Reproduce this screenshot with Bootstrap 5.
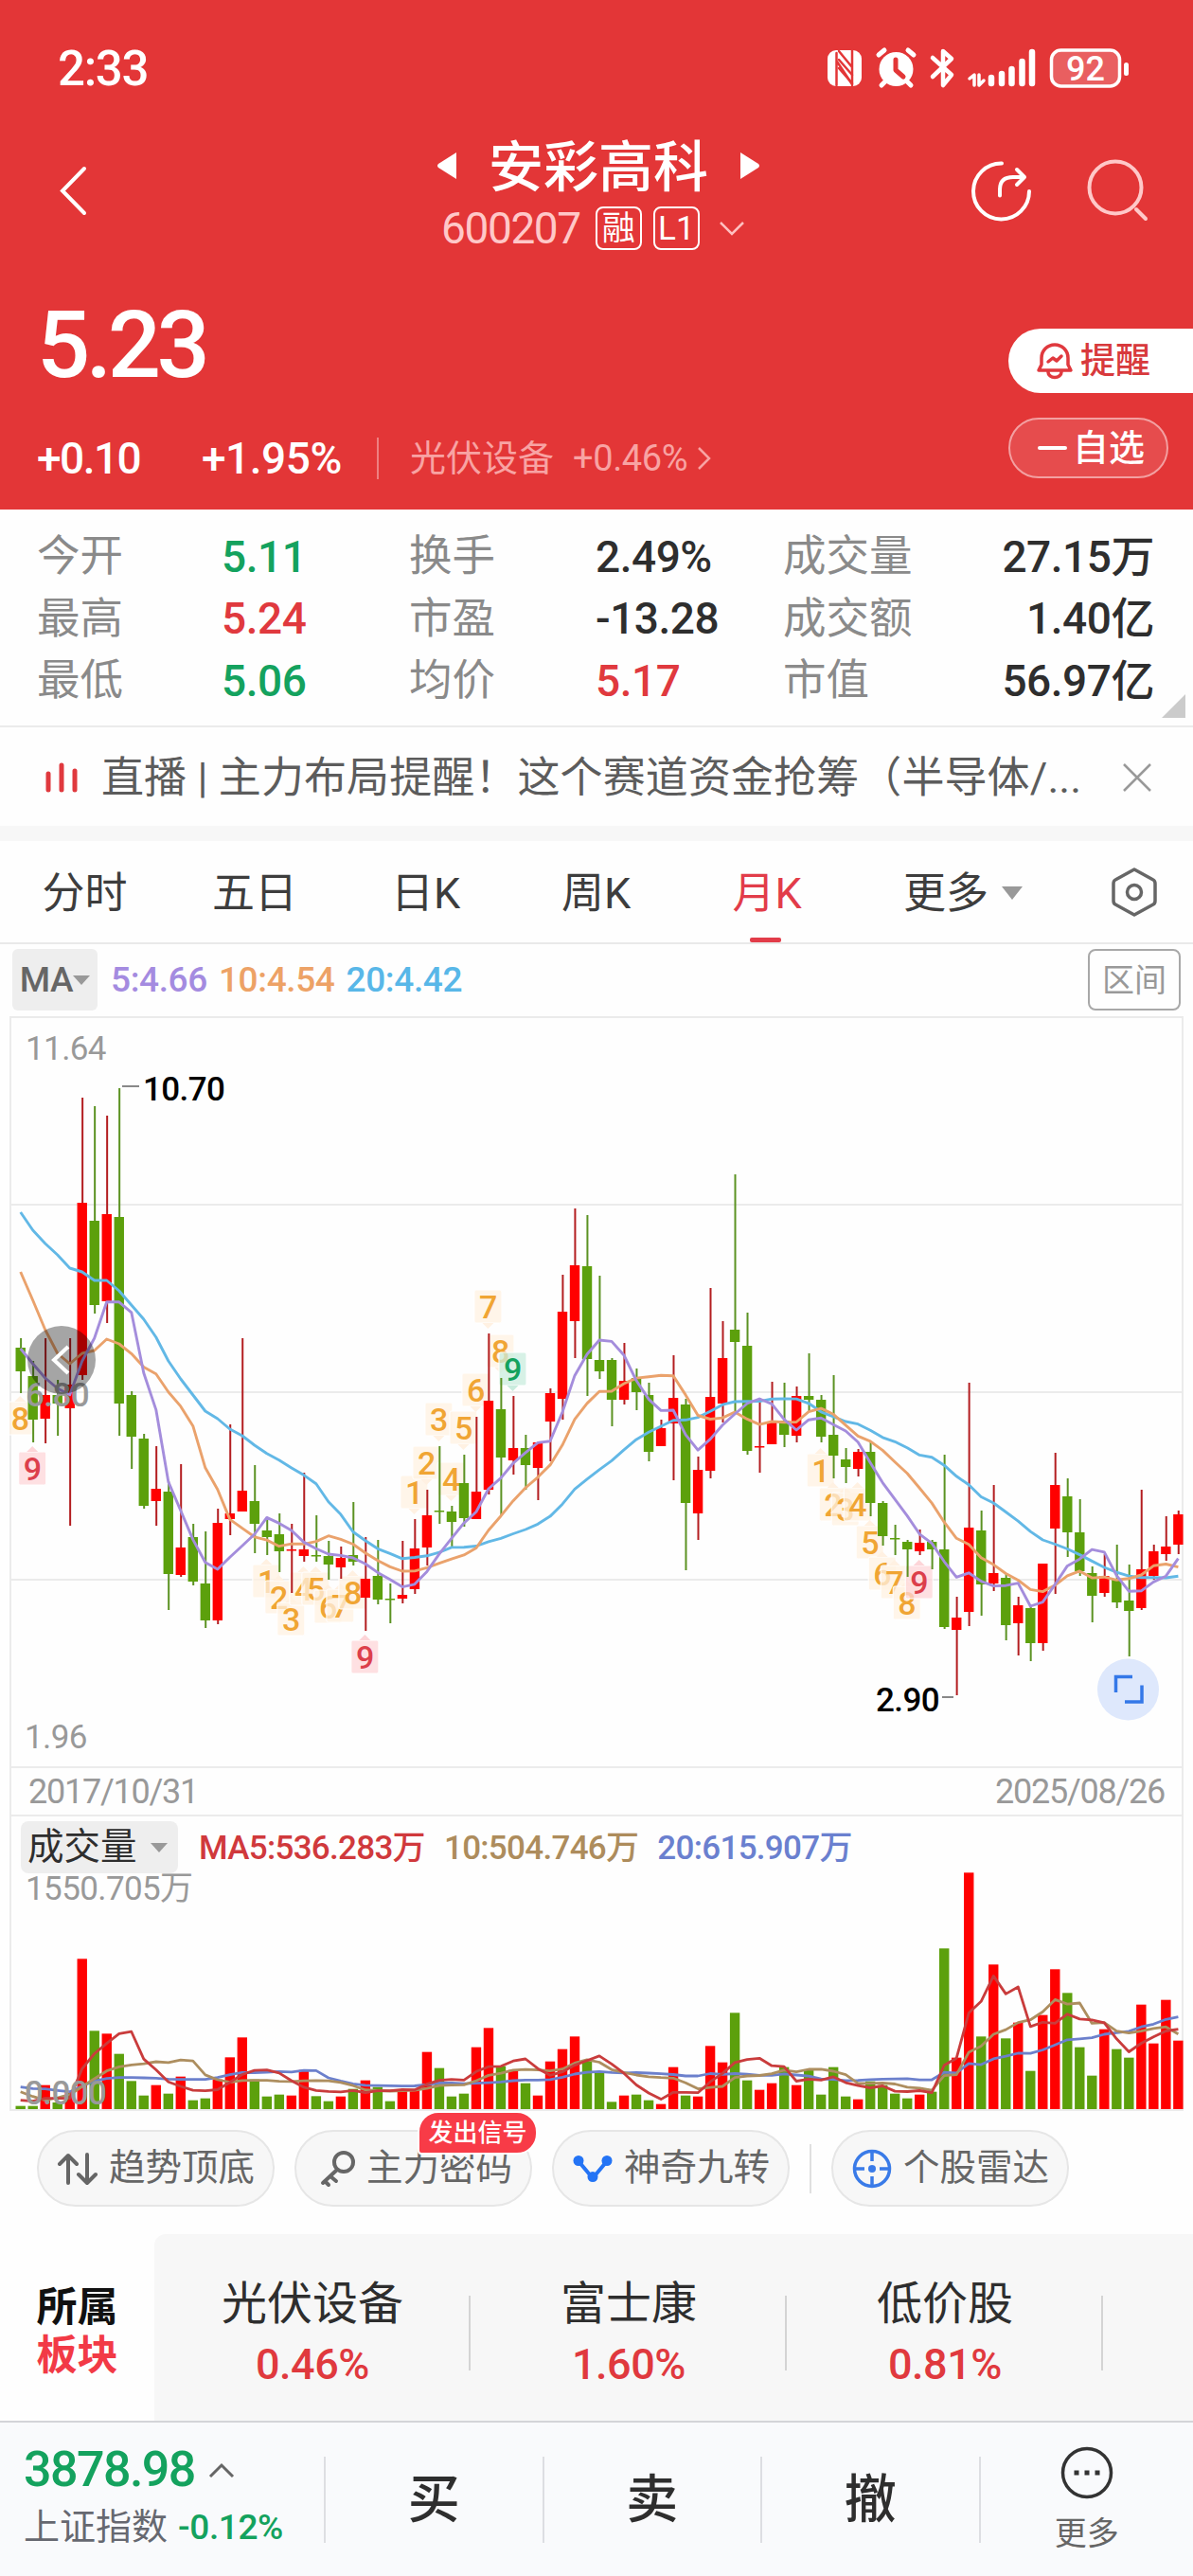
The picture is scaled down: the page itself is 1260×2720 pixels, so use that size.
<!DOCTYPE html>
<html lang="zh-CN">
<head>
  <meta charset="UTF-8" />
  <meta name="viewport" content="width=device-width, initial-scale=1" />
  <title>安彩高科 600207</title>

  <link href="https://cdn.jsdelivr.net/npm/bootstrap@5.3.0/dist/css/bootstrap.min.css" rel="stylesheet">
  <style>
    body {
      width: 1260px;
      background: #fefefe;
      color: #2e2e2e;
      font-family: Roboto, "Noto Sans CJK SC", sans-serif;
      font-size: 45px;
      line-height: 1;
    }
    span, div { white-space: nowrap; }
    svg { display: block; flex-shrink: 0; overflow: visible; }
    .num { letter-spacing: -0.01em; }
    .up { color: #e0393e; }
    .down { color: #14a25e; }

    /* header */
    .top-area { height: 538px; background: #e33637; color: #fff; }
    .status-bar { height: 144px; padding: 0 68px 0 61px; }
    .clock { font-size: 51px; font-weight: 500; letter-spacing: -1.3px; }
    .title-bar { height: 132px; padding: 0 46px 0 62px; }
    .stock-name { font-size: 58px; font-weight: 500; padding: 0 33px; }
    .stock-code { font-size: 46px; color: #ffc8c8; letter-spacing: -0.03em; }
    .tag-box { width: 49px; height: 46px; border: 2px solid #fff; border-radius: 8px; font-size: 35px; }
    .price-row { height: 262px; padding-left: 39px; }
    .last-price { padding-top: 39px; font-size: 99px; font-weight: 500; letter-spacing: -4.5px; }
    .change-row { padding-top: 47px; font-size: 46px; font-weight: 500; }
    .sector { color: #f8a3a3; font-weight: 400; font-size: 38px; }
    .v-line { width: 2px; height: 44px; background: #ee8081; }
    .remind { width: 195px; height: 68px; padding-left: 30px; border-radius: 34px 0 0 34px; background: #fff; color: #d8393c; font-size: 37px; font-weight: 500; }
    .favor { width: 169px; height: 64px; padding-left: 29px; border: 2px solid #f3a0a1; border-radius: 32px; background: #e64c4d; font-size: 38px; font-weight: 500; }
    .dash { width: 31px; height: 4px; border-radius: 2px; background: #fff; }

    /* quote table */
    .quotes { height: 230px; padding: 17px 41px 0 39px; border-bottom: 2px solid #ebebeb; }
    .quote-row { height: 65.5px; font-size: 46px; }
    .quote-row .num { font-weight: 500; }
    .quote-row .lbl { color: #8a8a8a; font-size: 45.5px; }
    .fold-mark { right: 8px; bottom: 8px; width: 25px; height: 25px; background: #cbcbcb; clip-path: polygon(100% 0, 100% 100%, 0 100%); }

    .notice { height: 104px; padding: 2px 44px 0 47px; color: #5c5c5c; }
    .band { height: 16px; background: #f7f7f7; }

    /* period tabs */
    .periods { height: 109px; border-bottom: 2px solid #e9e9e9; color: #3d3d3d; }
    .periods .tab-item { height: 107px; padding-top: 3px; }
    .tab-on { color: #e23c49; }
    .tab-on::after { content: ""; position: absolute; bottom: 0; left: 50%; width: 33px; height: 5px; margin-left: -18px; border-radius: 2px; background: #e23c49; }
    .caret { width: 0; height: 0; border: 11px solid transparent; border-bottom: 0; border-top: 14px solid #999; }
    .caret-sm { border-width: 9px; border-bottom: 0; border-top: 10px solid #999; }

    .ma-row { height: 65px; margin: 5px 13px 6px; font-size: 37px; font-weight: 500; }
    .ma-btn { width: 90px; height: 65px; border-radius: 6px; background: #eee; color: #666; }
    .range-btn { width: 98px; height: 65px; border: 2px solid #a8a8a8; border-radius: 8px; color: #999; font-size: 34px; font-weight: 400; }

    /* charts */
    svg text { font-family: Roboto, "Noto Sans CJK SC", sans-serif; font-size: 35px; letter-spacing: -0.6px; }
    .date-row { height: 51px; margin: 0 10px; padding: 0 18px 0 18px; border: 2px solid #ebebeb; border-top: 0; color: #999; font-size: 36px; letter-spacing: -0.035em; }
    .vol-head { height: 60px; margin: 0 10px; padding: 5px 10px 0; border: 2px solid #ebebeb; border-top: 0; border-bottom: 0; font-size: 35px; }
    .vol-head .num { font-weight: 500; letter-spacing: -0.02em; }
    .vol-btn { width: 166px; height: 55px; padding-left: 7px; border-radius: 8px; background: #eee; color: #2e2e2e; font-size: 38.5px; }

    /* signal pills */
    .pills { height: 130px; padding: 20px 0 0 39px; }
    .pill { width: 251px; height: 81px; border: 2px solid #e6e6e6; border-radius: 41px; background: #f7f7f7; color: #666; font-size: 38.5px; }
    .signal { right: -8px; top: -22px; width: 127px; height: 46px; border: 2px solid #fff; border-radius: 22px 22px 22px 4px; background: #f83b47; color: #fff; font-size: 26px; font-weight: 500; }

    .sectors { height: 197px; }
    .sector-title { width: 163px; padding-top: 8px; font-size: 43px; font-weight: 700; line-height: 51px; color: #111; }
    .sector-title .red { color: #f23a46; }
    .sector-list { border-top-left-radius: 12px; background: #f7f7f7; }
    .sector-cell { width: 334px; padding-top: 12px; font-size: 48px; }
    .sector-cell .num { padding-top: 17px; font-size: 45px; font-weight: 500; }
    .cell-line { width: 2px; height: 79px; margin-top: 12px; margin-left: -2px; background: #d4d4d4; }

    /* trade bar */
    .trade-bar { height: 164px; border-top: 2px solid #d3d4d8; background: #f9fafc; }
    .index-box { width: 342px; padding: 0 0 9px 25px; }
    .index-box .point { font-size: 52px; font-weight: 500; letter-spacing: -0.03em; }
    .index-box .name { padding-top: 15px; font-size: 38px; color: #666870; }
    .trade-line { width: 2px; height: 91px; background: #dddee2; }
    .trade-btn { width: 228.5px; font-size: 55px; font-weight: 500; }
  </style>
</head>
<body>

  <!-- Header -->
  <header class="top-area">
    <div class="status-bar d-flex align-items-center justify-content-between">
      <span class="clock">2:33</span>
      <svg width="318" height="42" viewBox="0 0 318 42" fill="#fff" stroke-linecap="round" stroke-linejoin="round">
        <rect y="2" width="36" height="38" rx="9"/>
        <path d="M9.500 39V5M12 3l14 17V2M10 14l16 24M26 39V3" fill="none" stroke="#e33637" stroke-width="2.500"/>
        <path d="M12 12l14 16M12 21l14 16" stroke="#e33637" stroke-width="2.500"/>
        <circle cx="72.500" cy="22" r="18"/>
        <path d="M54 7l6-5M91 7l-6-5M61 35l-4 4M84 35l4 4" stroke="#fff" stroke-width="5"/>
        <path d="M72 12v11l8 7" fill="none" stroke="#e33637" stroke-width="5"/>
        <path d="M111 10l20 18-9 11V3l9 8-20 19" fill="none" stroke="#fff" stroke-width="4.500"/>
        <path d="M150 32l5-4v11M160 28v11l5-5" fill="none" stroke="#fff" stroke-width="3.500"/>
        <path d="M173 31v6M184 27v10M194.500 22v15M205.500 14v23M216 4v33" stroke="#fff" stroke-width="6.500"/>
        <rect x="236.500" y="2" width="72" height="38" rx="10" fill="#e95f60" stroke="#fff" stroke-width="3.500"/>
        <rect x="313" y="15" width="5" height="14" rx="2.500"/>
        <text x="252" y="33.500" style="font-size:36px;font-weight:500;letter-spacing:0">92</text>
      </svg>
    </div>

    <div class="title-bar d-flex justify-content-between">
      <svg class="mt-4" width="32" height="66" viewBox="0 0 32 66" fill="none" stroke="#fff" stroke-width="4" stroke-linecap="round">
        <path d="M27 10L4 33.500 27 57"/>
      </svg>
      <div class="ps-5 ms-5 pt-1">
        <div class="d-flex align-items-center justify-content-center ps-5">
          <svg class="mb-1" width="21" height="28" viewBox="0 0 21 28" fill="#fff"><path d="M20 0v28L1 16q-2-2 0-4z"/></svg>
          <span class="stock-name">安彩高科</span>
          <svg class="mb-1" width="21" height="28" viewBox="0 0 21 28" fill="#fff"><path d="M1 0v28l19-12q2-2 0-4z"/></svg>
        </div>
        <div class="d-flex align-items-center ps-5 ms-1" style="margin-top:12px">
          <span class="stock-code">600207</span>
          <span class="tag-box d-flex align-items-center justify-content-center ms-3">融</span>
          <span class="tag-box d-flex align-items-center justify-content-center" style="margin-left:12px">L1</span>
          <svg style="margin-left:21px" width="26" height="16" viewBox="0 0 26 16" fill="none" stroke="#ffc0c0" stroke-width="2.500"><path d="M1 2l12 12L25 2"/></svg>
        </div>
      </div>
      <div class="d-flex mt-4">
        <svg width="64" height="68" viewBox="0 0 64 68" fill="none" stroke="#fff" stroke-width="4" stroke-linecap="round" stroke-linejoin="round">
          <path d="M32 4.500A29.500 29.500 0 1 0 61 34M30 38.500V32q0-13 14-13h12M48 11l8 8-8 8"/>
        </svg>
        <svg class="ms-5" width="76" height="68" viewBox="-11 0 76 68" fill="none" stroke="#ffc8c8" stroke-width="4" stroke-linecap="round">
          <circle cx="29" cy="30" r="27.500"/><path d="M51 53l10 10"/>
        </svg>
      </div>
    </div>

    <div class="price-row d-flex justify-content-between">
      <div>
        <div class="last-price">5.23</div>
        <div class="change-row d-flex align-items-center">
          <span style="width:174px;letter-spacing:-1.500px">+0.10</span>
          <span class="num" style="width:185px">+1.95%</span>
          <span class="v-line"></span>
          <span class="sector d-flex align-items-center" style="padding-left:33px">
            光伏设备<span class="num" style="padding-left:20px">+0.46%</span>
            <svg class="ms-2" width="18" height="26" viewBox="0 0 18 26" fill="none" stroke="#f8a3a3" stroke-width="2.500"><path d="M4 2l11 11L4 24"/></svg>
          </span>
        </div>
      </div>
      <div style="padding-top:71px">
        <div class="remind d-flex align-items-center">
          <svg width="38" height="40" viewBox="0 0 38 40" fill="none" stroke="#e0393e" stroke-width="3.500" stroke-linecap="round" stroke-linejoin="round">
            <path d="M5 24V17a14 14 0 0 1 28 0v7l3 6H2zM12 32a7 5.500 0 0 0 14 0M12 21l5-4 4 3 5-5"/>
          </svg>
          <span style="padding-left:8px">提醒</span>
        </div>
        <div class="favor d-flex align-items-center" style="margin-top:26px">
          <span class="dash"></span><span style="padding-left:6px">自选</span>
        </div>
      </div>
    </div>
  </header>

  <!-- Quote figures -->
  <section class="quotes position-relative">
    <div class="quote-row d-flex align-items-center">
      <span class="lbl" style="width:195px">今开</span><span class="num down" style="width:198px">5.11</span>
      <span class="lbl" style="width:197px">换手</span><span class="num" style="width:198px">2.49%</span>
      <span class="lbl">成交量</span><span class="num ms-auto">27.15万</span>
    </div>
    <div class="quote-row d-flex align-items-center">
      <span class="lbl" style="width:195px">最高</span><span class="num up" style="width:198px">5.24</span>
      <span class="lbl" style="width:197px">市盈</span><span class="num" style="width:198px">-13.28</span>
      <span class="lbl">成交额</span><span class="num ms-auto">1.40亿</span>
    </div>
    <div class="quote-row d-flex align-items-center">
      <span class="lbl" style="width:195px">最低</span><span class="num down" style="width:198px">5.06</span>
      <span class="lbl" style="width:197px">均价</span><span class="num up" style="width:198px">5.17</span>
      <span class="lbl">市值</span><span class="num ms-auto">56.97亿</span>
    </div>
    <i class="fold-mark position-absolute"></i>
  </section>

  <section class="notice d-flex align-items-center">
    <svg width="36" height="34" viewBox="0 0 36 34" stroke="#e0393e" stroke-width="5" stroke-linecap="round"><path d="M4 13v17M18 4v26M32 10v20"/></svg>
    <span style="padding-left:24px;letter-spacing:.1px">直播 | 主力布局提醒！这个赛道资金抢筹（半导体/...</span>
    <svg class="ms-auto" width="30" height="30" viewBox="0 0 30 30" stroke="#999" stroke-width="2.500"><path d="M1 1l28 28M29 1L1 29"/></svg>
  </section>
  <div class="band"></div>

  <!-- Period tabs -->
  <nav class="periods d-flex">
    <span class="tab-item d-flex align-items-center justify-content-center" style="width:179px">分时</span>
    <span class="tab-item d-flex align-items-center justify-content-center" style="width:180px">五日</span>
    <span class="tab-item d-flex align-items-center justify-content-center" style="width:181px">日K</span>
    <span class="tab-item d-flex align-items-center justify-content-center" style="width:179px">周K</span>
    <span class="tab-item tab-on position-relative d-flex align-items-center justify-content-center" style="width:182px">月K</span>
    <span class="tab-item d-flex align-items-center" style="padding-left:53px">更多<i class="caret" style="margin-left:14px"></i></span>
    <svg class="ms-auto align-self-center" style="margin-right:37px" width="50" height="54" viewBox="0 0 50 54" fill="none" stroke="#666" stroke-width="3.500" stroke-linejoin="round">
      <path d="M25 3l20 11q2 1 2 4v18q0 3-2 4L25 51 5 40q-2-1-2-4V18q0-3 2-4z"/><circle cx="25" cy="27" r="7.500"/>
    </svg>
  </nav>

  <div class="ma-row d-flex align-items-center">
    <span class="ma-btn d-flex align-items-center justify-content-center"><span class="num">MA</span><i class="caret caret-sm"></i></span>
    <span class="num" style="color:#a48be0;padding-left:14px">5:4.66</span>
    <span class="num" style="color:#eda266;padding-left:12px">10:4.54</span>
    <span class="num" style="color:#58b7e8;padding-left:12px">20:4.42</span>
    <span class="range-btn d-flex align-items-center justify-content-center ms-auto">区间</span>
  </div>

  <!-- Candles, drawn by the script below -->
  <svg id="priceChart" width="1260" height="794" viewBox="0 1073 1260 794"></svg>
  <div class="date-row d-flex align-items-center justify-content-between">
    <span>2017/10/31</span><span>2025/08/26</span>
  </div>
  <div class="vol-head d-flex align-items-start">
    <span class="vol-btn d-flex align-items-center">成交量<i class="caret caret-sm" style="margin-left:14px"></i></span>
    <span class="num" style="color:#d0393c;padding:11px 0 0 22px">MA5:536.283万</span>
    <span class="num" style="color:#ad8c5c;padding:11px 0 0 20px">10:504.746万</span>
    <span class="num" style="color:#6a80cf;padding:11px 0 0 20px">20:615.907万</span>
  </div>
  <svg id="volChart" width="1260" height="251" viewBox="0 1978 1260 251"></svg>

  <!-- Signal pills -->
  <section class="pills d-flex">
    <div class="pill d-flex align-items-center" style="padding-left:20px">
      <svg width="42" height="36" viewBox="0 0 42 36" fill="none" stroke="#666" stroke-width="4" stroke-linecap="round" stroke-linejoin="round"><path d="M11 33V4M2 13l9-9 9 9M31 3v29M22 24l9 9 9-9"/></svg>
      <span style="padding-left:12px">趋势顶底</span>
    </div>
    <div class="pill position-relative d-flex align-items-center" style="margin-left:21px;padding-left:25px">
      <svg width="38" height="38" viewBox="0 0 38 38" fill="none" stroke="#666" stroke-width="4" stroke-linecap="round"><circle cx="25" cy="12" r="10"/><path d="M18 20L3 34M11 27l6 5M5 32l4 4"/></svg>
      <span style="padding-left:11px">主力密码</span>
      <span class="signal position-absolute d-flex align-items-center justify-content-center">发出信号</span>
    </div>
    <div class="pill d-flex align-items-center" style="margin-left:21px;padding-left:20px">
      <svg width="42" height="30" viewBox="0 0 42 30" fill="#2474f5"><path d="M6 7l15 18L36 7" fill="none" stroke="#2474f5" stroke-width="4"/><circle cx="6" cy="6.500" r="5.500"/><circle cx="36" cy="6.500" r="5.500"/><circle cx="21" cy="23.500" r="5.500"/></svg>
      <span style="padding-left:12px">神奇九转</span>
    </div>
    <span style="width:2px;height:52px;margin:15px 21px 0 21px;background:#e0e0e0"></span>
    <div class="pill d-flex align-items-center" style="padding-left:20px">
      <svg width="42" height="42" viewBox="0 0 42 42" fill="none" stroke="#3a7be8" stroke-width="3.500"><circle cx="21" cy="21" r="18.500"/><path d="M21 2v11M21 29v11M2 21h11M29 21h11"/><circle cx="21" cy="21" r="4" fill="#3a7be8" stroke="none"/></svg>
      <span style="padding-left:12px">个股雷达</span>
    </div>
  </section>

  <!-- Related sectors -->
  <section class="sectors d-flex">
    <div class="sector-title text-center d-flex flex-column justify-content-center"><span>所属</span><span class="red">板块</span></div>
    <div class="sector-list d-flex flex-fill align-items-center overflow-hidden">
      <div class="sector-cell text-center">光伏设备<div class="num up">0.46%</div></div><i class="cell-line"></i>
      <div class="sector-cell text-center">富士康<div class="num up">1.60%</div></div><i class="cell-line"></i>
      <div class="sector-cell text-center">低价股<div class="num up">0.81%</div></div><i class="cell-line"></i>
    </div>
  </section>

  <!-- Trade bar -->
  <footer class="trade-bar d-flex align-items-center">
    <div class="index-box">
      <div class="d-flex align-items-center">
        <span class="point down">3878.98</span>
        <svg style="margin-left:15px" width="26" height="15" viewBox="0 0 26 15" fill="none" stroke="#666" stroke-width="3"><path d="M1 14L13 2l12 12"/></svg>
      </div>
      <div class="name d-flex align-items-center">上证指数<span class="num down" style="padding-left:11px;font-size:37px;font-weight:500">-0.12%</span></div>
    </div>
    <i class="trade-line"></i><span class="trade-btn text-center">买</span>
    <i class="trade-line"></i><span class="trade-btn text-center">卖</span>
    <i class="trade-line"></i><span class="trade-btn text-center">撤</span>
    <i class="trade-line"></i>
    <div class="flex-fill d-flex flex-column align-items-center pb-1">
      <svg width="56" height="56" viewBox="0 0 56 56" fill="none" stroke="#333" stroke-width="3.500"><circle cx="28" cy="28" r="25.500"/><path d="M14.500 28h5M25.500 28h5M36.500 28h5" stroke-width="5"/></svg>
      <span style="font-size:34px;padding-top:19px;color:#666">更多</span>
    </div>
  </footer>

  <script src="https://cdn.jsdelivr.net/npm/bootstrap@5.3.0/dist/js/bootstrap.bundle.min.js"></script>
  <script>
    // one candle per month: direction, high, body top, body bottom, low
    const candles = `g1413,1423,1448,1471 g1437,1453,1499,1523 r1413,1473,1498,1524 g1457,1473,1482,1516 r1413,1462,1487,1611
      r1159,1270,1452,1457 g1168,1289,1378,1387 r1178,1282,1374,1397 g1149,1285,1482,1516 g1469,1473,1517,1551
      g1514,1519,1590,1593 r1527,1572,1585,1611 g1564,1575,1662,1700 r1546,1634,1663,1665 g1609,1623,1670,1674
      g1617,1672,1711,1719 r1593,1608,1711,1715 r1504,1598,1604,1621 r1413,1574,1596,1596 g1547,1585,1609,1640
      g1604,1616,1623,1642 g1598,1620,1638,1660 r1609,1636,1637,1682 r1555,1636,1643,1649 g1600,1642,1643,1649
      g1627,1643,1652,1668 r1633,1645,1655,1667 g1586,1642,1649,1653 r1623,1667,1687,1722 g1626,1664,1689,1694
      g1672,1688,1689,1714 r1627,1684,1688,1693 r1604,1635,1678,1683 r1573,1600,1634,1653 g1527,1595,1596,1609
      g1590,1596,1607,1633 g1536,1566,1603,1612 r1496,1575,1604,1604 r1408,1479,1573,1578 g1455,1488,1539,1600
      r1474,1529,1542,1557 g1515,1529,1547,1573 r1523,1523,1550,1584 r1466,1471,1501,1543 r1346,1385,1477,1499
      r1276,1336,1395,1434 g1283,1337,1435,1474 g1347,1436,1448,1456 g1434,1436,1478,1506 r1418,1458,1478,1483
      g1445,1455,1470,1489 g1460,1473,1533,1543 r1499,1508,1527,1527 r1431,1476,1503,1563 g1477,1483,1587,1658
      r1538,1552,1598,1626 r1360,1475,1553,1561 r1395,1434,1482,1502 g1240,1404,1417,1490 g1386,1421,1532,1536
      r1476,1527,1528,1555 r1459,1502,1525,1525 g1460,1500,1515,1528 r1464,1474,1516,1523 g1429,1474,1478,1490
      g1473,1478,1517,1523 g1452,1515,1537,1561 g1529,1541,1549,1566 r1530,1533,1551,1559 g1522,1533,1587,1601
      g1585,1587,1622,1632 g1610,1624,1625,1642 g1626,1628,1636,1665 r1615,1629,1638,1642 g1626,1628,1636,1657
      g1536,1636,1718,1720 r1686,1708,1721,1790 r1460,1613,1702,1717 g1595,1616,1673,1706 r1568,1661,1672,1680
      g1662,1666,1716,1732 r1686,1695,1714,1748 g1695,1698,1735,1754 r1651,1651,1735,1743 r1534,1568,1614,1683
      g1561,1580,1618,1644 g1583,1618,1659,1664 g1654,1661,1685,1713 r1641,1664,1682,1686 g1631,1668,1692,1698
      g1652,1690,1701,1749 r1573,1657,1698,1700 r1631,1638,1664,1668 r1601,1633,1641,1648 r1595,1599,1631,1641`
      .split(/\s+/).map(s => [s[0], ...s.slice(1).split(',').map(Number)]);

    const volumes = [10,10,76,21,56,476,248,239,175,89,43,76,49,103,28,34,94,164,227,94,40,46,43,124,41,25,40,64,91,70,25,58,
      61,181,130,40,49,196,257,136,124,82,43,151,190,230,156,115,23,43,46,28,16,133,43,40,200,148,305,91,61,82,133,76,124,46,
      133,40,31,88,76,49,34,46,55,509,163,749,230,458,224,274,121,298,443,368,196,106,253,190,163,331,208,346,217];

    // nine-turn markers: candle index, digit, box top, colour, side of the pointer
    const marks = [[0,8,1480,'o','t'],[1,9,1533,'r','t'],
      [20,1,1652,'o','t'],[21,2,1669,'o','t'],[22,3,1692,'o','t'],[23,4,1660,'o','t'],[24,5,1660,'o','t'],[25,6,1679,'o','t'],
      [26,7,1678,'o','t'],[27,8,1664,'o','t'],[28,9,1732,'r','t'],
      [32,1,1558,'o','b'],[33,2,1527,'o','b'],[34,3,1481,'o','b'],[35,4,1544,'o','b'],[36,5,1490,'o','b'],[37,6,1450,'o','b'],
      [38,7,1362,'o','b'],[39,8,1409,'o','b'],[40,9,1428,'g','b'],
      [65,1,1535,'o','t'],[66,2,1571,'o','t'],[67,3,1576,'o','t'],[68,4,1571,'o','t'],[69,5,1611,'o','t'],[70,6,1644,'o','t'],
      [71,7,1653,'o','t'],[72,8,1675,'o','t'],[73,9,1653,'r','t']];
    const markBox = { o: '#fff1e2', r: '#fdd5d8', g: '#c9ecdd' };
    const markText = { o: '#f0a534', r: '#dc3f4b', g: '#14a25e' };

    const body = { r: '#ff0000', g: '#5ca00c' };
    const wick = { r: '#b31d20', g: '#5b9222' };
    const xAt = i => 21.7 + i * 13.007;

    // average of the last n values; the first n-1 points come from earlier months
    function average(values, n, head) {
      return values.map((v, i) => i < n - 1 ? head[i]
        : values.slice(i - n + 1, i + 1).reduce((a, b) => a + b) / n);
    }
    function polyline(values, color, toY, width) {
      const pts = values.map((v, i) => xAt(i).toFixed(1) + ',' + toY(v).toFixed(1)).join(' ');
      return `<polyline points="${pts}" fill="none" stroke="${color}" stroke-width="${width}" stroke-linejoin="round"/>`;
    }

    // price chart
    let out = '<path d="M11 1073V1867M1249 1073V1867M10 1074H1250M11 1272H1249M11 1470H1249M11 1668H1249M10 1866H1250" stroke="#ebebeb" stroke-width="2"/>';
    out += '<clipPath id="plot"><rect x="10" y="1073" width="1240" height="794"/></clipPath><g clip-path="url(#plot)">';
    marks.forEach(([i, digit, top, c, side]) => {
      const x = xAt(i) - 0.5;
      const tip = side === 't' ? `M${x - 6} ${top}l6-6 6 6` : `M${x - 6} ${top + 35}l6 6 6-6`;
      out += `<rect x="${x - 14.5}" y="${top}" width="29" height="35" rx="2" fill="${markBox[c]}" fill-opacity=".75" stroke="#fff" stroke-width="1"/>`;
      out += `<path d="${tip}" fill="${markBox[c]}"/>`;
      out += `<text x="${x}" y="${top + 30}" text-anchor="middle" fill="${markText[c]}" style="font-size:34px;font-weight:500">${digit}</text>`;
    });
    candles.forEach(([c, high, top, bottom, low], i) => {
      const x = xAt(i);
      out += `<path d="M${x + .4} ${high}V${low}" stroke="${wick[c]}" stroke-width="2"/>`;
      out += `<rect x="${x - 5.2}" y="${top}" width="10.400" height="${Math.max(bottom - top, 1.5)}" fill="${body[c]}"/>`;
    });
    const closes = candles.map(([c, high, top, bottom]) => c === 'r' ? top : bottom);
    const same = y => y;
    out += polyline(average(closes, 20, [1280,1299,1313,1325,1339,1343,1352,1352,1363,1378,1393,1412,1437,1456,1473,1490,1498,1509,1516]), '#62b8e6', same, 2.9);
    out += polyline(average(closes, 10, [1343,1373,1404,1429,1440,1429,1426,1414,1419]), '#eaa26c', same, 2.9);
    out += polyline(average(closes, 5, [1424,1440,1455,1466]), '#a48ddc', same, 2.9);
    out += '</g>';
    out += `<text x="27" y="1119" fill="#999">11.64</text><text x="27" y="1485" fill="#999" font-weight="500">6.80</text><text x="26" y="1846" fill="#999">1.96</text>
      <path d="M129 1147h18M995 1792h12" stroke="#888" stroke-width="2"/>
      <g font-weight="500"><text x="151" y="1162" fill="#000">10.70</text><text x="925" y="1807" fill="#000">2.90</text></g>
      <circle cx="65" cy="1436" r="36" fill="#000" fill-opacity=".35"/>
      <path d="M72 1422l-15 14 15 14" fill="none" stroke="#fff" stroke-width="4"/>
      <circle cx="1191.500" cy="1784" r="32.500" fill="#dee8fc"/>
      <path d="M1196 1770.500h-17.500V1787M1206 1779.500v17.500h-18" fill="none" stroke="#3478e8" stroke-width="3.500"/>`;
    document.getElementById('priceChart').innerHTML = out;

    // volume chart
    const volY = v => 2227 - v / 3;
    out = '<path d="M11 1978V2229M1249 1978V2229M10 2228H1250" stroke="#ebebeb" stroke-width="2"/>';
    volumes.forEach((v, i) => {
      out += `<rect x="${xAt(i) - 5.2}" y="${volY(v)}" width="10.400" height="${v / 3}" fill="${body[candles[i][0]]}"/>`;
    });
    out += polyline(average(volumes, 20, [70,65,64,59,55,73,89,97,100,100,99,98,95,94,94,94,100,109,116]), '#6c80cc', volY, 2.8);
    out += polyline(average(volumes, 10, [55,40,28,36,46,71,96,121,134]), '#ad8e5f', volY, 2.8);
    out += polyline(average(volumes, 5, [28,25,34,34]), '#c93c3c', volY, 2.8);
    out += '<text x="27" y="2006" fill="#999">1550.705万</text><text x="26" y="2222" fill="#999" font-weight="500">0.000</text>';
    document.getElementById('volChart').innerHTML = out;
  </script>
</body>
</html>
